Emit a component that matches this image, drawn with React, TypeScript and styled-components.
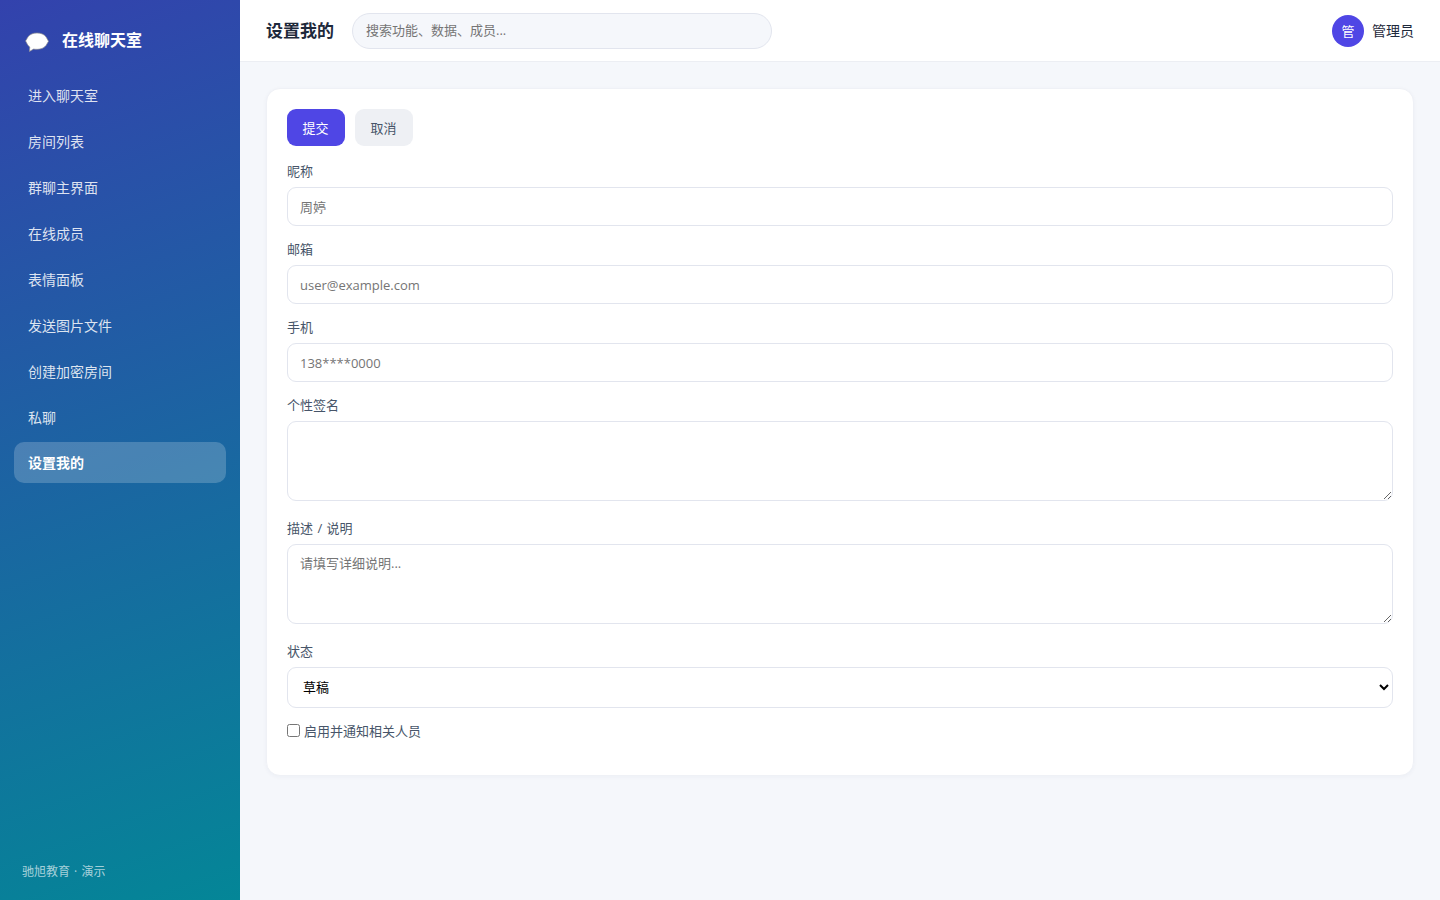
import React from "react";
import styled, { createGlobalStyle } from "styled-components";

const GlobalStyle = createGlobalStyle`
  * { box-sizing: border-box; }
  body {
    margin: 0;
    background: #f5f7fb;
    color: #1e293b;
    font-family: "Open Sans", "Noto Sans CJK SC", sans-serif;
    font-size: 14px;
  }
  input, textarea, select, button { font-family: inherit; }
`;

const Layout = styled.div`
  display: flex;
  height: 100vh;
`;

const Sidebar = styled.aside`
  display: flex;
  flex-direction: column;
  flex: 0 0 240px;
  padding: 22px 14px 18px;
  background: linear-gradient(160deg, #3342ad 0%, #048697 100%);
  color: #fff;
`;

const Brand = styled.div`
  display: flex;
  align-items: center;
  gap: 13px;
  height: 36px;
  padding-left: 11px;
  margin-bottom: 16px;
  font-size: 16px;
  font-weight: 700;
  line-height: 36px;
`;

const BrandIcon = styled.svg`
  width: 24px;
  height: 20px;
  margin-top: 4px;
`;

const Nav = styled.nav`
  display: flex;
  flex-direction: column;
  gap: 5px;
`;

const NavItem = styled.a<{ $active?: boolean }>`
  height: 41px;
  padding: 0 14px;
  border-radius: 10px;
  line-height: ${(p) => (p.$active ? 42 : 43)}px;
  font-weight: ${(p) => (p.$active ? 700 : 400)};
  color: ${(p) => (p.$active ? "#fff" : "rgba(255, 255, 255, 0.85)")};
  background: ${(p) => (p.$active ? "rgba(255, 255, 255, 0.2)" : "transparent")};
`;

const SidebarFooter = styled.div`
  margin-top: auto;
  padding-left: 8px;
  font-size: 12px;
  line-height: 20px;
  word-spacing: 1px;
  color: rgba(255, 255, 255, 0.65);
`;

const Content = styled.div`
  display: flex;
  flex-direction: column;
  flex: 1;
  min-width: 0;
`;

const Topbar = styled.header`
  display: flex;
  align-items: center;
  height: 62px;
  padding: 0 26px;
  background: #fff;
  border-bottom: 1px solid #eceef3;
`;

const Title = styled.h1`
  margin: 0 18px 0 0;
  padding-top: 1px;
  font-size: 17px;
  font-weight: 700;
  line-height: 24px;
`;

const Search = styled.input`
  width: 420px;
  height: 36px;
  padding: 0 14px 1px 13px;
  border: 1px solid #e2e5ee;
  border-radius: 18px;
  background: #f5f7fb;
  font-size: 13px;
  &::placeholder { color: #757575; }
`;

const User = styled.div`
  display: flex;
  align-items: center;
  gap: 8px;
  margin-left: auto;
  line-height: 20px;
`;

const Avatar = styled.span`
  width: 32px;
  height: 32px;
  border-radius: 50%;
  background: #4f46e5;
  color: #fff;
  font-size: 13px;
  line-height: 32px;
  text-align: center;
`;

const Main = styled.main`
  padding: 26px;
`;

const Card = styled.section`
  height: 688px;
  padding: 20px;
  border: 1px solid #eff1f6;
  border-radius: 14px;
  background: #fff;
  box-shadow: 0 1px 4px rgba(30, 41, 90, 0.04);
`;

const Actions = styled.div`
  display: flex;
  gap: 10px;
  margin-bottom: 15px;
`;

const Button = styled.button<{ $primary?: boolean }>`
  width: 58px;
  height: 37px;
  padding: 0 1px 1px 0;
  border: 0;
  border-radius: 9px;
  background: ${(p) => (p.$primary ? "#4f46e5" : "#eef0f4")};
  color: ${(p) => (p.$primary ? "#fff" : "#475569")};
  font-size: 13px;
`;

const Field = styled.label<{ $gap?: number }>`
  display: flex;
  flex-direction: column;
  gap: 6px;
  margin-bottom: ${(p) => p.$gap ?? 13}px;
  color: #475569;
  font-size: 13px;
  line-height: 20px;
  word-spacing: 1px;
`;

const controlBox = `
  display: block;
  width: 100%;
  margin: 0;
  border: 1px solid #e2e5ee;
  border-radius: 9px;
  background: #fff;
  font-size: 13px;
`;

const TextInput = styled.input`
  ${controlBox}
  height: 39px;
  padding: 0 12px;
  &::placeholder { color: #757575; }
`;

const TextArea = styled.textarea`
  ${controlBox}
  height: 80px;
  padding: 8px 12px;
  line-height: 20px;
  resize: vertical;
  &::placeholder { color: #757575; }
`;

const Select = styled.select`
  ${controlBox}
  height: 41px;
  padding: 0 12px 1px 11px;
  color: #000;
`;

const CheckRow = styled.label`
  display: flex;
  align-items: center;
  gap: 4px;
  color: #475569;
  font-size: 13px;
  line-height: 20px;
`;

const Checkbox = styled.input`
  width: 13px;
  height: 13px;
  margin: 0 0 2px;
`;

const navItems = [
  "进入聊天室",
  "房间列表",
  "群聊主界面",
  "在线成员",
  "表情面板",
  "发送图片文件",
  "创建加密房间",
  "私聊",
  "设置我的",
];

export default function App() {
  return (
    <>
      <GlobalStyle />
      <Layout>
        <Sidebar>
          <Brand>
            <BrandIcon viewBox="0 0 24 20">
              <path
                d="M12 1C8 1 5.3 2.2 3.2 4.6L.6 8.9l2.3 4.4 1.9 1.8-.4 4.4 4.2-2.4c5.5.7 9.7-.3 12.4-3.6L23.5 9.3 21 4.8C18.9 2.2 16 1 12 1Z"
                fill="#fff"
                stroke="#8c8c91"
                strokeWidth=".7"
              />
            </BrandIcon>
            在线聊天室
          </Brand>
          <Nav>
            {navItems.map((name) => (
              <NavItem key={name} $active={name === "设置我的"}>
                {name}
              </NavItem>
            ))}
          </Nav>
          <SidebarFooter>驰旭教育 · 演示</SidebarFooter>
        </Sidebar>
        <Content>
          <Topbar>
            <Title>设置我的</Title>
            <Search placeholder="搜索功能、数据、成员..." />
            <User>
              <Avatar>管</Avatar>
              管理员
            </User>
          </Topbar>
          <Main>
            <Card>
              <Actions>
                <Button $primary>提交</Button>
                <Button>取消</Button>
              </Actions>
              <Field>
                昵称
                <TextInput placeholder="周婷" />
              </Field>
              <Field>
                邮箱
                <TextInput placeholder="user@example.com" />
              </Field>
              <Field>
                手机
                <TextInput placeholder="138****0000" />
              </Field>
              <Field $gap={17}>
                个性签名
                <TextArea />
              </Field>
              <Field $gap={17}>
                描述 / 说明
                <TextArea placeholder="请填写详细说明..." />
              </Field>
              <Field>
                状态
                <Select defaultValue="draft">
                  <option value="draft">草稿</option>
                </Select>
              </Field>
              <CheckRow>
                <Checkbox type="checkbox" />
                启用并通知相关人员
              </CheckRow>
            </Card>
          </Main>
        </Content>
      </Layout>
    </>
  );
}
